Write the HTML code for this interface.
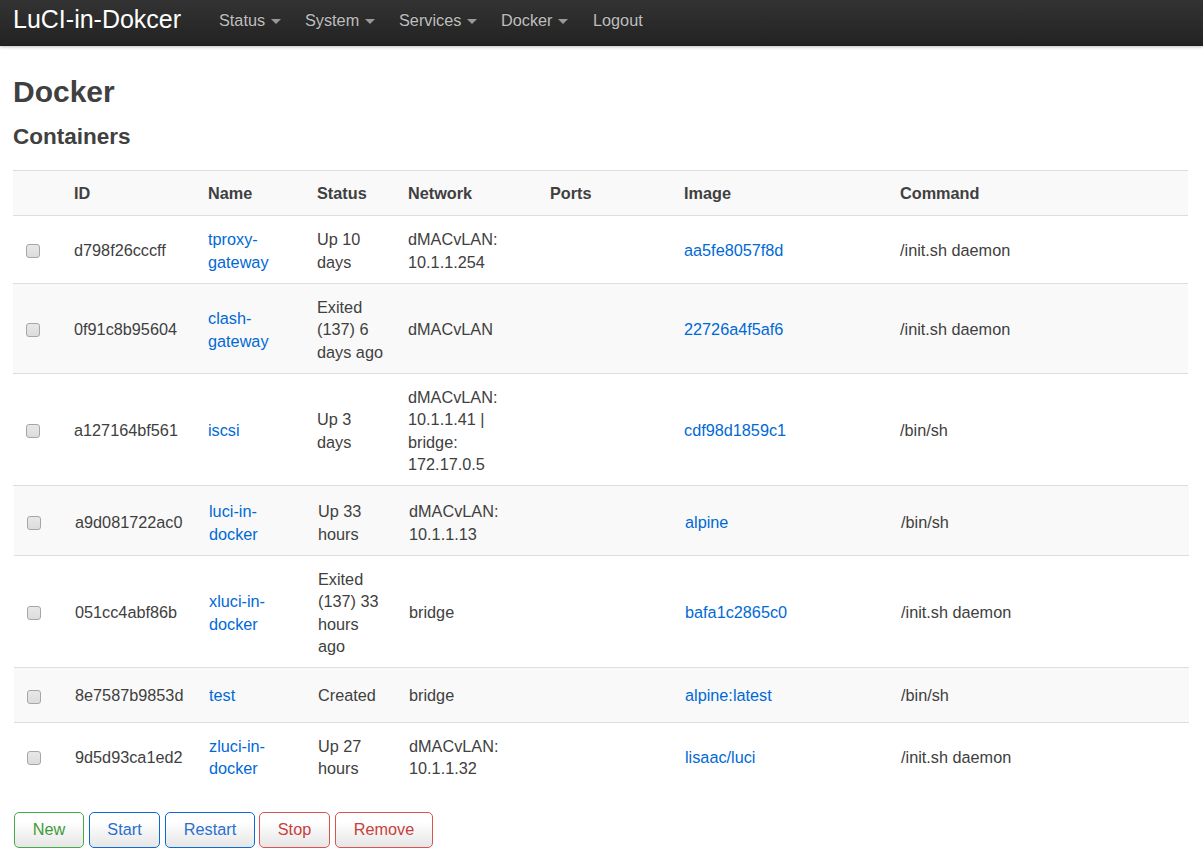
<!DOCTYPE html>
<html><head><meta charset="utf-8">
<style>
html,body{margin:0;padding:0;background:#fff;}
body{width:1203px;height:860px;overflow:hidden;position:relative;font-family:"Liberation Sans",sans-serif;color:#404040;}
.hdr{position:absolute;left:0;top:0;width:1203px;height:46px;background:linear-gradient(to bottom,#333,#222);box-shadow:0 1px 3px rgba(0,0,0,.25),inset 0 -1px 0 rgba(0,0,0,.1);}
.brand{position:absolute;left:13px;top:3.5px;font-size:25px;line-height:30px;color:#fff;white-space:nowrap;}
.nav{position:absolute;top:9px;font-size:16.25px;line-height:22px;color:#bfbfbf;white-space:nowrap;text-shadow:0 -1px 0 rgba(0,0,0,.25);}
.caret{display:inline-block;width:0;height:0;border-left:5px solid transparent;border-right:5px solid transparent;border-top:5px solid #999;vertical-align:middle;margin-left:6px;margin-top:0px;}
h2{position:absolute;left:13px;top:74px;margin:0;font-size:30px;line-height:36px;font-weight:bold;color:#404040;}
h3{position:absolute;left:13px;top:123px;margin:0;font-size:22.5px;line-height:28px;font-weight:bold;color:#404040;}
table{position:absolute;left:13px;top:170px;width:1175px;border-collapse:separate;border-spacing:0;table-layout:fixed;font-size:16.25px;line-height:22.5px;}
td,th{padding:0 0 0 12.5px;text-align:left;vertical-align:middle;border-bottom:1px solid #ddd;}
th{border-top:1px solid #ddd;}
tr.last td{border-bottom:0;}
th{font-weight:bold;}
tr.g td,tr.g th{background:#f9f9f9;}
tr.s td{transform:translateX(1px);}
.v{position:relative;}
a{color:#0069d6;text-decoration:none;}
.cb{display:inline-block;width:12px;height:12px;border:1px solid #a6a6a6;border-radius:3px;background:linear-gradient(#e8e8e8,#dcdcdc);vertical-align:middle;margin-left:0.5px;}
.btns{position:absolute;left:14px;top:812px;}
.btn{position:absolute;top:0;height:34px;border:1px solid;border-radius:5px;background:linear-gradient(to bottom,#fff 0%,#fff 25%,#e6e6e6 100%);font-size:16.25px;line-height:32px;padding-bottom:2px;height:32px;text-align:center;box-sizing:content-box;}
</style></head><body>
<div class="hdr">
<div class="brand">LuCI-in-Dokcer</div>
<div class="nav" style="left:219px">Status<span class="caret"></span></div>
<div class="nav" style="left:305px">System<span class="caret"></span></div>
<div class="nav" style="left:399px">Services<span class="caret"></span></div>
<div class="nav" style="left:501px">Docker<span class="caret"></span></div>
<div class="nav" style="left:593px">Logout</div>
</div>
<h2>Docker</h2>
<h3>Containers</h3>
<table>
<colgroup><col style="width:48.5px"><col style="width:134px"><col style="width:109px"><col style="width:91px"><col style="width:142px"><col style="width:134px"><col style="width:216px"><col style="width:300.5px"></colgroup>
<tr class="g" style="height:46px"><th></th><th>ID</th><th>Name</th><th>Status</th><th>Network</th><th>Ports</th><th>Image</th><th>Command</th></tr>
<tr style="height:68px"><td><div class="v" style="top:0px"><span class="cb"></span></div></td><td><div class="v" style="top:1px">d798f26cccff</div></td><td><div class="v" style="top:1px"><a>tproxy-<br>gateway</a></div></td><td><div class="v" style="top:1px">Up 10<br>days</div></td><td><div class="v" style="top:1px">dMACvLAN:<br>10.1.1.254</div></td><td></td><td><div class="v" style="top:1px"><a>aa5fe8057f8d</a></div></td><td><div class="v" style="top:1px">/init.sh daemon</div></td></tr>
<tr class="g" style="height:90px"><td><div class="v" style="top:0px"><span class="cb"></span></div></td><td><div class="v" style="top:1px">0f91c8b95604</div></td><td><div class="v" style="top:1px"><a>clash-<br>gateway</a></div></td><td><div class="v" style="top:1px">Exited<br>(137) 6<br>days ago</div></td><td><div class="v" style="top:1px">dMACvLAN</div></td><td></td><td><div class="v" style="top:1px"><a>22726a4f5af6</a></div></td><td><div class="v" style="top:1px">/init.sh daemon</div></td></tr>
<tr style="height:112px"><td><div class="v" style="top:0px"><span class="cb"></span></div></td><td><div class="v" style="top:1px">a127164bf561</div></td><td><div class="v" style="top:1px"><a>iscsi</a></div></td><td><div class="v" style="top:1px">Up 3<br>days</div></td><td><div class="v" style="top:1px">dMACvLAN:<br>10.1.1.41 |<br>bridge:<br>172.17.0.5</div></td><td></td><td><div class="v" style="top:1px"><a>cdf98d1859c1</a></div></td><td><div class="v" style="top:1px">/bin/sh</div></td></tr>
<tr class="g s" style="height:70px"><td><div class="v" style="top:1px"><span class="cb"></span></div></td><td><div class="v" style="top:2px">a9d081722ac0</div></td><td><div class="v" style="top:2px"><a>luci-in-<br>docker</a></div></td><td><div class="v" style="top:2px">Up 33<br>hours</div></td><td><div class="v" style="top:2px">dMACvLAN:<br>10.1.1.13</div></td><td></td><td><div class="v" style="top:2px"><a>alpine</a></div></td><td><div class="v" style="top:2px">/bin/sh</div></td></tr>
<tr class="s" style="height:112px"><td><div class="v" style="top:0px"><span class="cb"></span></div></td><td><div class="v" style="top:1px">051cc4abf86b</div></td><td><div class="v" style="top:1px"><a>xluci-in-<br>docker</a></div></td><td><div class="v" style="top:1px">Exited<br>(137) 33<br>hours<br>ago</div></td><td><div class="v" style="top:1px">bridge</div></td><td></td><td><div class="v" style="top:1px"><a>bafa1c2865c0</a></div></td><td><div class="v" style="top:1px">/init.sh daemon</div></td></tr>
<tr class="g s" style="height:55px"><td><div class="v" style="top:1px"><span class="cb"></span></div></td><td><div class="v" style="top:0px">8e7587b9853d</div></td><td><div class="v" style="top:0px"><a>test</a></div></td><td><div class="v" style="top:0px">Created</div></td><td><div class="v" style="top:0px">bridge</div></td><td></td><td><div class="v" style="top:0px"><a>alpine:latest</a></div></td><td><div class="v" style="top:0px">/bin/sh</div></td></tr>
<tr class="s last" style="height:68px"><td><div class="v" style="top:0px"><span class="cb"></span></div></td><td><div class="v" style="top:0px">9d5d93ca1ed2</div></td><td><div class="v" style="top:0px"><a>zluci-in-<br>docker</a></div></td><td><div class="v" style="top:0px">Up 27<br>hours</div></td><td><div class="v" style="top:0px">dMACvLAN:<br>10.1.1.32</div></td><td></td><td><div class="v" style="top:0px"><a>lisaac/luci</a></div></td><td><div class="v" style="top:0px">/init.sh daemon</div></td></tr>
</table>
<div class="btns">
<div class="btn" style="left:0;width:68px;border-color:#45ab45;color:#3c9b3c">New</div>
<div class="btn" style="left:75px;width:69px;border-color:#0d6ad4;color:#2a6fd0">Start</div>
<div class="btn" style="left:151px;width:88px;border-color:#0d6ad4;color:#2a6fd0">Restart</div>
<div class="btn" style="left:245px;width:69px;border-color:#d9534f;color:#c9403c">Stop</div>
<div class="btn" style="left:321px;width:96px;border-color:#d9534f;color:#c9403c">Remove</div>
</div>
</body></html>
